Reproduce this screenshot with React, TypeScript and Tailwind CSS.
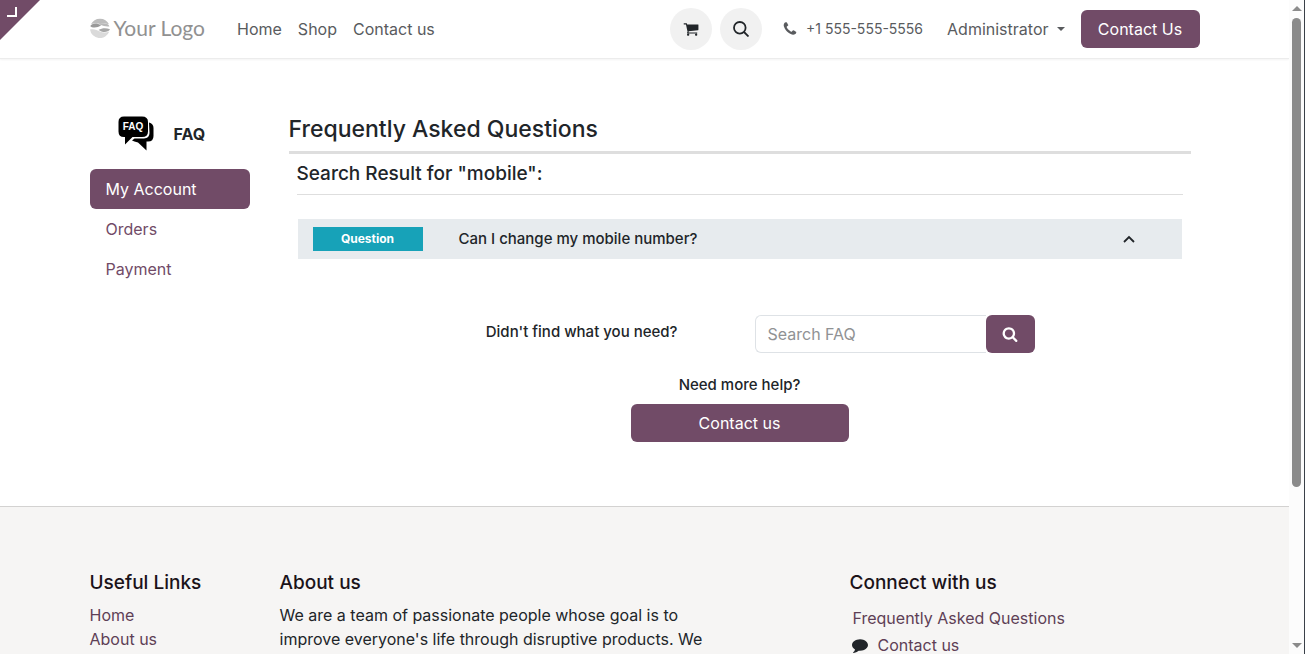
import React, { useState } from 'react';

interface IconProps {
  path: string;
  className?: string;
}

// Font Awesome 4 glyphs, drawn on the 1792 grid
const CART =
  'M704 1536q0 52-38 90t-90 38-90-38-38-90 38-90 90-38 90 38 38 90zm896 0q0 52-38 90t-90 38-90-38-38-90 38-90 90-38 90 38 38 90zm128-1088v512q0 24-16.500 42.500t-40.500 21.500l-1044 122q13 60 13 70 0 16-24 64h920q26 0 45 19t19 45-19 45-45 19h-1024q-26 0-45-19t-19-45q0-11 8-31.500t16-36 21.500-40 15.500-29.500l-177-823h-204q-26 0-45-19t-19-45 19-45 45-19h256q16 0 28.500 6.500t19.500 15.500 13 24.500 8 26 5.500 29.500 4.500 26h1201q26 0 45 19t19 45z';
const PHONE =
  'M1600 1240q0 27-10 70.500t-21 68.500q-21 50-122 106-94 51-186 51-27 0-53-3.500t-57.500-12.500-47-14.500-55.500-20.500-49-18q-98-35-175-83-127-79-264-216t-216-264q-48-77-83-175-3-9-18-49t-20.500-55.500-14.500-47-12.500-57.500-3.500-53q0-92 51-186 56-101 106-122 25-11 68.500-21t70.500-10q14 0 21 3 18 6 53 76 11 19 30 54t35 63.500 31 53.500q3 4 17.500 25t21.500 35.500 7 28.500q0 20-28.500 50t-62 55-62 53-28.500 46q0 9 5 22.500t8.500 20.500 14 24 11.500 19q76 137 174 235t235 174q2 1 19 11.500t24 14 20.500 8.500 22.500 5q18 0 46-28.500t53-62 55-62 50-28.500q14 0 28.500 7t35.500 21.500 25 17.500q25 15 53.500 31t63.500 35 54 30q70 35 76 53 3 7 3 21z';
const SEARCH =
  'M1216 832q0-185-131.500-316.500t-316.500-131.500-316.500 131.500-131.500 316.500 131.500 316.500 316.500 131.500 316.500-131.500 131.500-316.500zm512 832q0 52-38 90t-90 38q-54 0-90-38l-343-342q-179 124-399 124-143 0-273.500-55.500t-225-150-150-225-55.500-273.500 55.500-273.500 150-225 225-150 273.500-55.500 273.500 55.500 225 150 150 225 55.500 273.500q0 220-124 399l343 343q37 37 37 90z';
const COMMENT =
  'M1792 896q0 174-120 321.500t-326 233-450 85.500q-70 0-145-8-198 175-460 242-49 14-114 22-17 2-30.500-9t-17.500-29v-1q-3-4-.5-12t2-10 4.500-9.500l6-9 7-8.500 8-9q7-8 31-34.500t34.500-38 31-39.500 32.500-51 27-59 26-76q-157-89-247.500-220t-90.500-281q0-130 71-248.500t191-204.500 286-136.500 348-50.500q244 0 450 85.500t326 233 120 321.500z';

const Icon: React.FC<IconProps> = ({ path, className }) => (
  <svg viewBox="0 0 1792 1792" fill="currentColor" className={className} aria-hidden="true">
    <path d={path} />
  </svg>
);

const Logo = () => (
  <a href="#" className="flex items-center gap-1 pb-0.5 text-[#919191]">
    <svg viewBox="0 0 20 20" className="w-5 h-5" aria-hidden="true">
      <path d="M1 6.300A10 10 0 0 1 19 6.300C16 5 13 5.300 10 6C7 5 4 5 1 6.300z" fill="#bcbcbc" />
      <path d="M0.300 8C2 5 7 4.500 11 7.500C9 8.500 7 9.500 4.500 9.500C2.500 9.500 1 9 0.300 8z" fill="#999" />
      <path d="M9 6.500C13 5 18 5.200 19.500 8.200C17 9 14 8 9 6.500z" fill="#b8b8b8" />
      <path d="M8.500 12C12 10 16 9.800 20 11.300C19 13.500 16 14.300 13.500 14C11.500 13.700 10 12.800 8.500 12z" fill="#a6a6a6" />
      <path d="M0 11.500C4 10.500 7 12 10 13.500C13 15 16 14.800 19.300 13.500A10 10 0 0 1 0 11.500z" fill="#dadada" />
    </svg>
    <span className="font-[Lato,sans-serif] text-[21px] leading-6">Your Logo</span>
  </a>
);

const FaqMark = () => (
  <svg viewBox="0 0 36 36" className="w-9 h-9" aria-hidden="true">
    <path d="M31 6.500Q35.500 7.500 35.500 12V20Q35.500 25.500 30 25.500H28.500V34.500L20 26.500Q16 25.500 14 24.500L16.500 22.500H26Q31.500 22 31.500 17z" />
    <path d="M6 0.500H24Q30 0.500 30 6V15.500Q30 21 24 21H14.500L7 28.500V21H6Q0.500 21 0.500 15.500V6Q0.500 0.500 6 0.500z" />
    <text
      x="15"
      y="14"
      fill="#fff"
      textAnchor="middle"
      className="font-['Liberation_Sans',sans-serif] text-[10px] font-bold"
    >
      FAQ
    </text>
  </svg>
);

const Header = () => (
  <header className="border-b border-[#ececec] shadow-[0_1px_2px_rgba(0,0,0,0.05)]">
    <div className="max-w-[1140px] mx-auto px-[15px] h-[58px] flex items-center text-[#595b5e]">
      <Logo />
      <nav className="flex gap-4 ml-8">
        <a href="#">Home</a>
        <a href="#">Shop</a>
        <a href="#">Contact us</a>
      </nav>
      <div className="flex items-center ml-auto">
        <a href="#" aria-label="Cart" className="size-[42px] rounded-full bg-[#f1f1f1] text-[#212529] flex items-center justify-center">
          <Icon path={CART} className="size-4" />
        </a>
        <button aria-label="Search" className="size-[42px] ml-2 rounded-full bg-[#f1f1f1] text-[#212529] flex items-center justify-center">
          <svg viewBox="0 0 16 16" fill="none" stroke="currentColor" strokeWidth="1.800" className="size-4" aria-hidden="true">
            <circle cx="6.800" cy="6.800" r="5.800" />
            <path d="M11 11l4.500 4.500" />
          </svg>
        </button>
        <a href="#" className="flex items-center gap-2 ml-5 text-sm">
          <Icon path={PHONE} className="size-4" />
          +1 555-555-5556
        </a>
        <button className="flex items-center gap-2 ml-6">
          Administrator
          <span className="border-x-4 border-x-transparent border-t-4 border-t-[#595b5e]" />
        </button>
        <a href="#" className="ml-4 w-[119px] h-[38px] flex items-center justify-center rounded-md bg-[#714b67] text-white">
          Contact Us
        </a>
      </div>
    </div>
  </header>
);

const Sidebar = () => (
  <aside className="w-[190px] shrink-0 px-[15px] pt-14">
    <div className="flex items-center gap-5 pl-7 h-[38px] mb-4">
      <FaqMark />
      <strong className="font-bold">FAQ</strong>
    </div>
    <nav className="flex flex-col text-[#714b67]">
      <a href="#" className="px-4 py-2 rounded-md bg-[#714b67] text-white">My Account</a>
      <a href="#" className="px-4 py-2">Orders</a>
      <a href="#" className="px-4 py-2">Payment</a>
    </nav>
  </aside>
);

const Results = () => {
  const [open, setOpen] = useState(false);

  return (
    <section className="flex-1 px-6 pt-14">
      <h1 className="text-[23px] leading-7 font-medium pb-2 border-b-3 border-[#dedede]">Frequently Asked Questions</h1>
      <div className="px-2">
        <h2 className="text-[19px] leading-6 font-medium pt-2 pb-2 border-b border-[#dedede]">
          Search Result for "mobile":
        </h2>
        <div className="px-px mt-6">
          <button
            onClick={() => setOpen(!open)}
            aria-expanded={open}
            className="w-full h-10 px-[15px] flex items-center bg-[#e7ebee] text-left"
          >
            <span className="w-[110px] h-6 flex items-center justify-center bg-[#17a2b8] text-white text-xs font-bold">
              Question
            </span>
            <span className="ml-9 text-[15px] font-medium">Can I change my mobile number?</span>
            <svg
              viewBox="0 0 12 8"
              fill="none"
              stroke="currentColor"
              strokeWidth="1.800"
              className="w-3 h-2 ml-auto mr-8"
              aria-hidden="true"
            >
              <path d="M1 7l5-5 5 5" />
            </svg>
          </button>
          {open && <p className="px-4 py-3">Yes, you can change it from your account page.</p>}
        </div>

        <form className="grid grid-cols-2 items-center mt-14" onSubmit={(e) => e.preventDefault()}>
          <label htmlFor="faq-search" className="text-[15px] font-medium text-right pr-[62px] pb-1">
            Didn't find what you need?
          </label>
          <div className="flex pl-[15px]">
            <input
              id="faq-search"
              type="text"
              placeholder="Search FAQ"
              className="w-[231px] h-[38px] px-3 border border-r-0 border-[#dee2e6] rounded-l-md placeholder:text-[#909294]"
            />
            <button aria-label="Search" className="w-[49px] h-[38px] flex items-center justify-center rounded-md bg-[#714b67] text-white">
              <Icon path={SEARCH} className="size-4" />
            </button>
          </div>
        </form>

        <div className="flex flex-col items-center gap-[7px] mt-5 mb-16">
          <h3 className="text-[15px] leading-6 font-medium">Need more help?</h3>
          <a href="#" className="w-[218px] h-[38px] flex items-center justify-center rounded-md bg-[#714b67] text-white">
            Contact us
          </a>
        </div>
      </div>
    </section>
  );
};

const Footer = () => (
  <footer className="border-t border-[#d3d2d1] bg-[#f6f5f4] pt-16 pb-16">
    <div className="max-w-[1140px] mx-auto grid grid-cols-12">
      <div className="col-span-2 px-[15px]">
        <h4 className="text-[19px] leading-6 font-medium mb-2 text-[#1b1319]">Useful Links</h4>
        <div className="flex flex-col text-[#5e3f56]">
          <a href="#">Home</a>
          <a href="#">About us</a>
        </div>
      </div>
      <div className="col-span-5 px-[15px]">
        <h4 className="text-[19px] leading-6 font-medium mb-2 text-[#1b1319]">About us</h4>
        <p>We are a team of passionate people whose goal is to improve everyone's life through disruptive products. We</p>
      </div>
      <div className="col-span-4 col-start-9 px-[15px]">
        <h4 className="text-[19px] leading-6 font-medium mb-2 text-[#1b1319]">Connect with us</h4>
        <div className="flex flex-col gap-[3px] pt-[3px] text-[#5e3f56]">
          <a href="#" className="pl-[3px]">Frequently Asked Questions</a>
          <a href="#" className="flex items-center gap-2.5">
            <Icon path={COMMENT} className="size-4 ml-0.5 text-[#212529]" />
            Contact us
          </a>
        </div>
      </div>
    </div>
  </footer>
);

const Scrollbar = () => (
  <div className="w-4 shrink-0 flex flex-col items-center bg-[#fcfcfc] border-r border-[#3a4048] py-1.5" aria-hidden="true">
    <span className="border-x-5 border-x-transparent border-b-5 border-b-[#8b8b8b]" />
    <span className="w-[9px] h-[73%] mt-[7px] rounded-full bg-[#8b8b8b]" />
    <span className="mt-auto border-x-5 border-x-transparent border-t-5 border-t-[#8b8b8b]" />
  </div>
);

export default function App() {
  return (
    <div className="h-screen flex overflow-hidden bg-white font-[Inter,sans-serif] text-base text-[#212529]">
      <div className="relative flex-1 overflow-hidden">
        <Header />
        <svg viewBox="0 0 40 40" className="absolute top-0 left-0 size-10" aria-hidden="true">
          <path d="M0 0h40L0 40z" fill="#714b67" />
          <path d="M16 7v9H7" fill="none" stroke="#fff" strokeWidth="2" />
        </svg>
        <main className="max-w-[1140px] mx-auto flex">
          <Sidebar />
          <Results />
        </main>
        <Footer />
      </div>
      <Scrollbar />
    </div>
  );
}
